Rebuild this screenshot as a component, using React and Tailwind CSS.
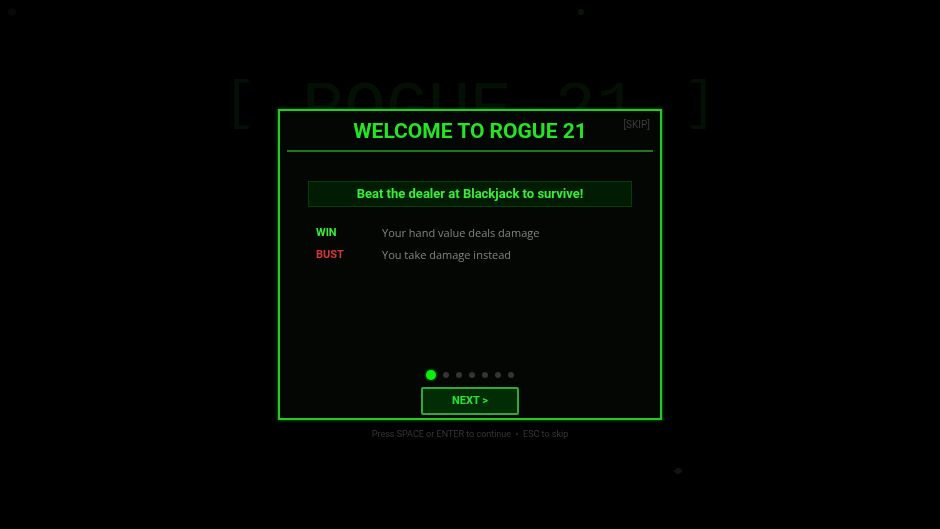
import React, { useEffect, useState } from 'react';

const STEPS = 7;

const rows = [
  { label: 'WIN', text: 'Your hand value deals damage', color: 'text-[#35f035]' },
  { label: 'BUST', text: 'You take damage instead', color: 'text-[#d93636]' },
];

const TitleScreen = () => (
  <div className="min-h-screen flex flex-col justify-between" aria-hidden="true">
    <div className="flex justify-between items-center px-2 py-2">
      <span className="w-2 h-2 rounded-full bg-[#050805]" />
      <span className="w-[6px] h-[6px] ml-[222px] rounded-full bg-[#081508]" />
      <span className="w-2 h-2" />
    </div>
    <div className="flex-1 flex items-start justify-center gap-1 pt-12 font-['Liberation_Mono',monospace] text-[70px] leading-[80px] text-[#031003]">
      <span className="text-[54px] leading-[64px]">[</span>
      <span className="whitespace-pre"> ROGUE 21 </span>
      <span className="text-[54px] leading-[64px]">]</span>
    </div>
    <div className="flex justify-end pr-[257px] pb-[54px]">
      <svg width="10" height="8" viewBox="0 0 10 8" fill="#10140e">
        <path d="M1 3h1l2-2h3l2 2v2L6 7H4L1 5z" />
      </svg>
    </div>
  </div>
);

const Dots = ({ step }) => (
  <div className="flex items-center justify-center gap-[7px] h-3">
    {Array.from({ length: STEPS }, (_, i) => (
      <span
        key={i}
        className={i === step ? 'w-[10px] h-[10px] rounded-full bg-[#0aee0a] shadow-[0_0_3px_#00cc00]' : 'w-[6px] h-[6px] rounded-full bg-[#333533]'}
      />
    ))}
  </div>
);

const App = () => {
  const [step, setStep] = useState(0);
  const [open, setOpen] = useState(true);

  const next = () => setStep((s) => Math.min(s + 1, STEPS - 1));

  useEffect(() => {
    const onKey = (e) => {
      if (e.key === 'Escape') setOpen(false);
      if (e.key === ' ' || e.key === 'Enter') {
        e.preventDefault();
        next();
      }
    };
    window.addEventListener('keydown', onKey);
    return () => window.removeEventListener('keydown', onKey);
  }, []);

  return (
    <main className="min-h-screen bg-black font-['Roboto',sans-serif]">
      <TitleScreen />

      {open && (
        <div className="fixed inset-0 flex items-center justify-center p-4">
          <section
            role="dialog"
            aria-labelledby="tutorial-title"
            className="relative w-full max-w-sm min-h-[311px] flex flex-col border-2 border-[#22cc26] bg-[#040604] px-[7px] pb-[3px] shadow-[0_0_3px_#0a8a0a]"
          >
            <header className="border-b-2 border-[#187a1a] pt-1 pb-[3px]">
              <h1 id="tutorial-title" className="text-center text-[21px] leading-8 font-bold text-[#22e622]">
                WELCOME TO ROGUE 21
              </h1>
            </header>
            <button
              type="button"
              onClick={() => setOpen(false)}
              className="absolute top-2 right-[10px] text-[10px] leading-3 text-[#3c3e3c] cursor-pointer"
            >
              [SKIP]
            </button>

            {/* Step content */}
            <div className="flex-1 px-[21px] pt-[29px]">
              <p className="border border-[#073d09] bg-[#021c03] text-center text-[13px] leading-6 font-bold text-[#35f035]">
                Beat the dealer at Blackjack to survive!
              </p>
              <dl className="px-2 pt-[15px] text-[11px] leading-[22px]">
                {rows.map((row) => (
                  <div key={row.label} className="flex">
                    <dt className={`w-[66px] font-bold ${row.color}`}>{row.label}</dt>
                    <dd className="font-['Open_Sans',sans-serif] text-[#828482]">{row.text}</dd>
                  </div>
                ))}
              </dl>
            </div>

            <Dots step={step} />
            <button
              type="button"
              onClick={next}
              className="self-center w-[98px] h-7 mt-[6px] rounded-[2px] border-2 border-[#32a836] bg-[#022c04] text-[11px] font-bold text-[#28e62c] cursor-pointer"
            >
              NEXT &gt;
            </button>

            <p className="absolute top-full inset-x-0 mt-2 text-center text-[9px] leading-4 text-[#353735]">
              Press SPACE or ENTER to continue &nbsp;•&nbsp; ESC to skip
            </p>
          </section>
        </div>
      )}
    </main>
  );
};

export default App;
